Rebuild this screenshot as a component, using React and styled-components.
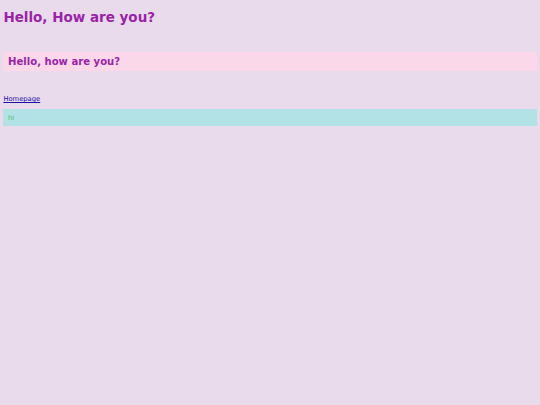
import React from "react";
import styled, { createGlobalStyle } from "styled-components";

const Global = createGlobalStyle`
  html, body { margin: 0; padding: 0; background: #e9dbec; }
  body { font-family: "DejaVu Sans", "Liberation Sans", sans-serif; min-height: 405px; }
`;

const Page = styled.div`
  padding: 0 3.4px;
  display: flex;
  flex-direction: column;
`;

const Title = styled.h1`
  margin: 9.5px 0 0;
  font-size: 13.5px;
  font-weight: bold;
  line-height: 15.7px;
  color: #9a24a8;
`;

const Banner = styled.div`
  margin-top: 26.8px;
  background: #fad8ea;
  padding: 3.8px 4.6px 3.4px;
`;

const BannerTitle = styled.h2`
  margin: 0;
  font-size: 10.1px;
  font-weight: bold;
  line-height: 11.8px;
  color: #9a24a8;
`;

const Nav = styled.div`
  margin-top: 25.4px;
  font-size: 6.75px;
  line-height: 7.9px;
`;

const NavLink = styled.a`
  color: #1a0dab;
  text-decoration: underline;
`;

const Note = styled.div`
  margin-top: 5.2px;
  background: #b2e2e6;
  padding: 5.6px 4.6px 2.8px;
  font-size: 6.75px;
  line-height: 7.9px;
  color: #4cbf6a;
`;

export default function App() {
  return (
    <>
      <Global />
      <Page>
        <Title>Hello, How are you?</Title>
        <Banner>
          <BannerTitle>Hello, how are you?</BannerTitle>
        </Banner>
        <Nav>
          <NavLink href="#">Homepage</NavLink>
        </Nav>
        <Note>hi</Note>
      </Page>
    </>
  );
}
